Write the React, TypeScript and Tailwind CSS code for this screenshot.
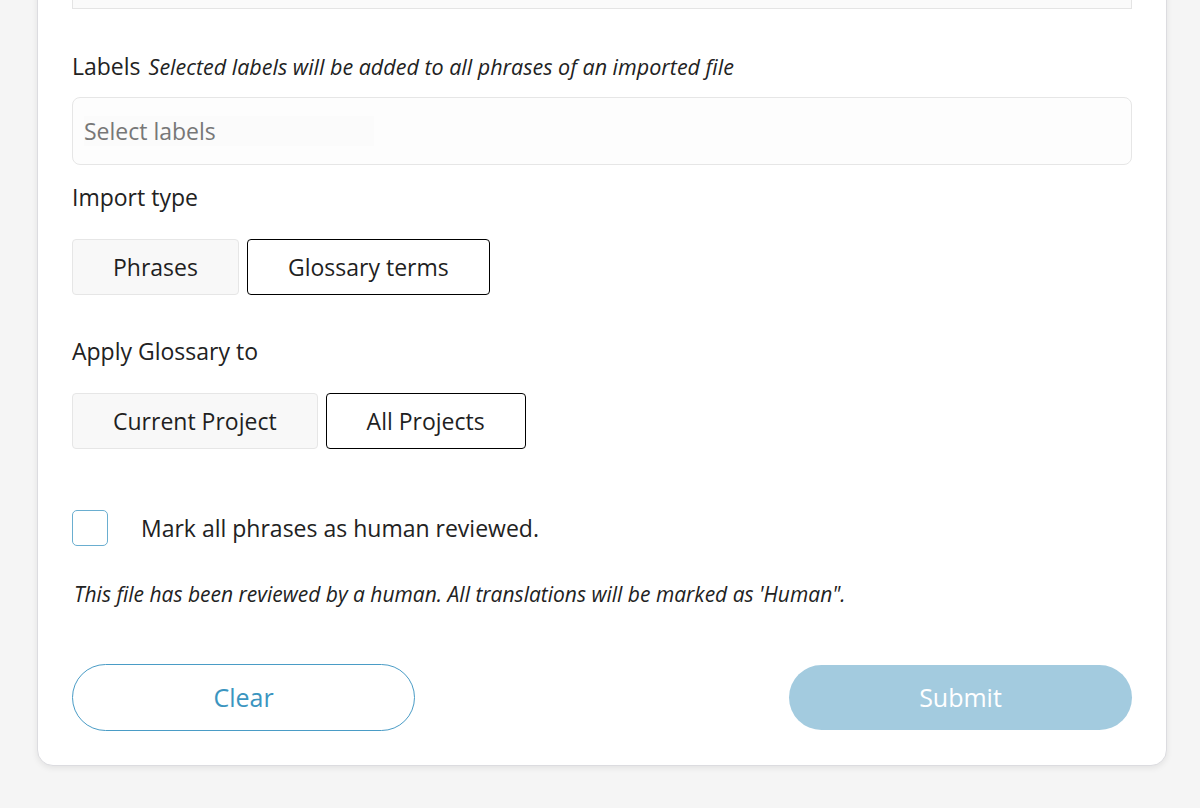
import React, { useState } from 'react';

const font = { fontFamily: '"Open Sans", Lato, sans-serif' };

const App: React.FC = () => {
  const [importType, setImportType] = useState<'phrases' | 'glossary'>('glossary');
  const [scope, setScope] = useState<'current' | 'all'>('all');
  const [reviewed, setReviewed] = useState(false);

  const toggleCls = (active: boolean) =>
    active
      ? 'h-[56px] px-[40px] rounded-[4px] border border-black bg-white text-[23px] text-[#1f1f1f]'
      : 'h-[56px] px-[40px] rounded-[4px] border border-[#e6e6e6] bg-[#f8f8f8] text-[23px] text-[#1f1f1f]';

  return (
    <div className="w-[1200px] h-[808px] bg-[#f5f5f5] overflow-hidden" style={font}>
      <div className="ml-[37px] w-[1130px] -mt-[20px] bg-white border border-[#dcdce0] rounded-b-[16px] shadow-[0_2px_6px_rgba(0,0,0,0.08)] px-[34px] pb-[34px]">
        {/* previous field, cut off at the top */}
        <div className="h-[28px] border border-[#e4e4e4] border-t-0 bg-[#fafafa]"></div>

        <div className="mt-[42px] flex items-baseline gap-2 text-[#222] leading-[30px]">
          <span className="text-[23px]">Labels</span>
          <span className="text-[21.5px] italic">Selected labels will be added to all phrases of an imported file</span>
        </div>

        <div className="mt-[15px] h-[68px] rounded-[8px] border border-[#e6e6e6] bg-[#fdfdfd] flex items-center px-[11px]">
          <div className="w-[290px] h-[30px] bg-[#fbfbfb] flex items-center text-[23px] text-[#777]">Select labels</div>
        </div>

        <div className="mt-[17px] text-[23px] leading-[30px] text-[#222]">Import type</div>
        <div className="mt-[27px] flex gap-2">
          <button className={toggleCls(importType === 'phrases')} style={font} onClick={() => setImportType('phrases')}>
            Phrases
          </button>
          <button className={toggleCls(importType === 'glossary')} style={font} onClick={() => setImportType('glossary')}>
            Glossary terms
          </button>
        </div>

        <div className="mt-[41px] text-[23px] leading-[30px] text-[#222]">Apply Glossary to</div>
        <div className="mt-[27px] flex gap-2">
          <button className={toggleCls(scope === 'current')} style={font} onClick={() => setScope('current')}>
            Current Project
          </button>
          <button className={toggleCls(scope === 'all')} style={font} onClick={() => setScope('all')}>
            All Projects
          </button>
        </div>

        <label className="mt-[61px] flex items-center gap-[33px] cursor-pointer">
          <span
            onClick={() => setReviewed(!reviewed)}
            className="w-[36px] h-[36px] rounded-[5px] border border-[#6aaed0] bg-white flex items-center justify-center"
          >
            {reviewed && (
              <svg width="20" height="20" viewBox="0 0 24 24" fill="none" stroke="#3b95c0" strokeWidth="3">
                <path d="M5 12l5 5L20 7" />
              </svg>
            )}
          </span>
          <span className="text-[23px] leading-[30px] text-[#222]">Mark all phrases as human reviewed.</span>
        </label>

        <p className="mt-[35px] ml-[2px] text-[21px] leading-[26px] italic text-[#222]">
          This file has been reviewed by a human. All translations will be marked as 'Human".
        </p>

        <div className="mt-[57px] flex justify-between items-center">
          <button className="w-[343px] h-[67px] rounded-full border border-[#4a9cc6] bg-white text-[25px] text-[#3b95c0]" style={font}>
            Clear
          </button>
          <button className="w-[343px] h-[65px] rounded-full bg-[#a3cbdf] text-[25px] text-white" style={font}>
            Submit
          </button>
        </div>
      </div>
    </div>
  );
};

export default App;
